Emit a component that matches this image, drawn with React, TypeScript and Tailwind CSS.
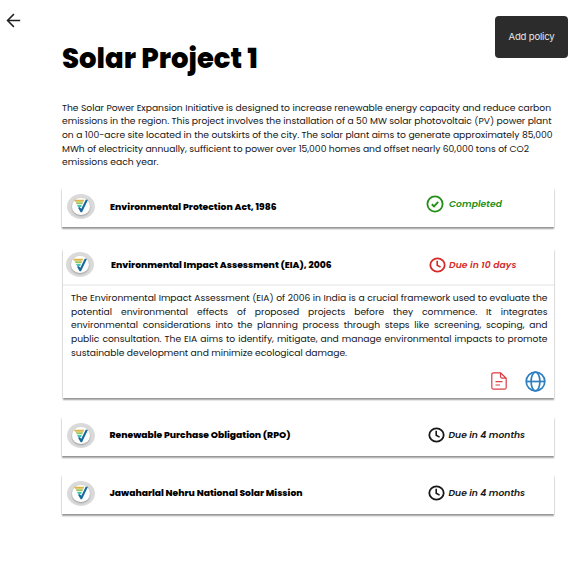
import { useLayoutEffect, useRef, useState } from "react";

/** One line of text whose tracking is adjusted so that it fills the given width. */
function Line({ text, width, className = "" }: { text: string; width: number; className?: string }) {
  const ref = useRef<HTMLSpanElement>(null);
  const [tracking, setTracking] = useState(0);
  useLayoutEffect(() => {
    if (ref.current) {
      const natural = ref.current.getBoundingClientRect().width - tracking * text.length;
      setTracking((width - natural) / text.length);
    }
  }, [text, width]);
  return (
    <span className={`block whitespace-nowrap ${className}`}>
      <span ref={ref} className="inline-block" style={{ letterSpacing: `${tracking}px` }}>
        {text}
      </span>
    </span>
  );
}

/** A line whose words are spread over the full measure of the paragraph. */
function JustifiedLine({ text }: { text: string }) {
  return <span className="block w-[476.5px] [text-align-last:justify]">{text}</span>;
}

function Badge() {
  return (
    <div className="flex h-[25px] w-7 shrink-0 items-center justify-center rounded-[50%] bg-[#dadada]">
      <div className="flex h-[17px] w-[18px] items-center justify-center rounded-full bg-white shadow-[0_1px_2px_rgba(0,0,0,0.3)]">
        <svg viewBox="0 0 42 42" className="h-3.5 w-3.5" fill="none">
          <path d="M0 2H31L28 8H3Z" fill="#d9b64a" />
          <path d="M5 10H27L25 16H8Z" fill="#9bc45a" />
          <path d="M9 18H23L22 24H12Z" fill="#45c6b4" />
          <path d="M12 26L17 24L22 29L35 2H42L24 40H20Z" fill="#176a9b" />
        </svg>
      </div>
    </div>
  );
}

function CheckIcon() {
  return (
    <svg viewBox="0 0 18 18" className="h-[18px] w-[18px]" fill="none" stroke="#229016" strokeWidth="1.8">
      <circle cx="9" cy="9" r="7.6" />
      <path d="M5.8 9.2L8 11.3L12.2 6.8" strokeWidth="1.9" />
    </svg>
  );
}

function ClockIcon() {
  return (
    <svg viewBox="0 0 17 16" className="h-4 w-[17px]" fill="none" stroke="currentColor" strokeWidth="1.8">
      <ellipse cx="8.5" cy="8" rx="7.2" ry="6.6" />
      <path d="M8.2 3.8V8.2L11.6 10.1" strokeWidth="1.6" />
    </svg>
  );
}

const intro = [
  { text: "The Solar Power Expansion Initiative is designed to increase renewable energy capacity and reduce carbon", width: 489 },
  { text: "emissions in the region. This project involves the installation of a 50 MW solar photovoltaic (PV) power plant", width: 489.5 },
  { text: "on a 100-acre site located in the outskirts of the city. The solar plant aims to generate approximately 85,000", width: 490.5 },
  { text: "MWh of electricity annually, sufficient to power over 15,000 homes and offset nearly 60,000 tons of CO2", width: 467 },
  { text: "emissions each year.", width: 96.5 },
];

const card = "w-[492px] bg-white shadow-[0_2px_1.5px_rgba(0,0,0,0.38),0_0_1.5px_rgba(0,0,0,0.16)] [clip-path:inset(0_-4px_-6px_-4px)]";

export default function App() {
  return (
    <div className="h-[562px] w-[582px] overflow-hidden bg-white font-['Poppins','Inter',sans-serif] text-black">
      <header className="flex h-[100.5px] items-start">
        <button className="ml-1.5 mt-[13px] h-[15px] w-[15px]" aria-label="Back">
          <svg viewBox="0 0 15 15" className="h-[15px] w-[15px]" fill="none" stroke="#202020" strokeWidth="1.5">
            <path d="M14.2 7.5H1.6M7.9 1.1L1.5 7.5L7.9 13.9" />
          </svg>
        </button>
        <h1 className="ml-[41px] mt-[39px] text-[27.5px] font-extrabold leading-10">
          <Line text="Solar Project 1" width={196} />
        </h1>
        <button className="ml-auto mr-3.5 mt-4 flex h-[42px] w-[73px] items-center justify-center rounded-[4px] bg-[#2c2c2c] font-['Inter',sans-serif] text-[9.6px] text-[#e6e6e6]">
          <Line text="Add policy" width={46} />
        </button>
      </header>

      <main className="pl-[62px]">
        <p className="text-[9.2px] leading-[13.7px] text-[#151515]">
          {intro.map((l) => (
            <Line key={l.text} text={l.text} width={l.width} />
          ))}
        </p>

        <section className={`mt-[19px] flex h-[39px] items-center ${card}`}>
          <div className="mb-[3px] ml-[5px]"><Badge /></div>
          <Line className="mb-0.5 ml-[15px] w-[317px] text-[9.2px] font-extrabold" text="Environmental Protection Act, 1986" width={166.5} />
          <div className="mb-[7px] flex items-center gap-[5px] text-[9.2px] font-semibold italic text-[#229016]">
            <span className="-ml-px"><CheckIcon /></span>
            <Line text="Completed" width={53} />
          </div>
        </section>

        <section className={`ml-px mt-[22px] !w-[491px] ${card}`}>
          <div className="flex h-[37px] items-center border-b-2 border-[#f1f1f1] pb-1">
            <div className="ml-[3px]"><Badge /></div>
            <Line className="ml-[17px] w-[317px] text-[9.2px] font-extrabold" text="Environmental Impact Assessment (EIA), 2006" width={220.5} />
            <div className="flex items-center gap-[3px] text-[9.2px] font-semibold italic text-[#d52b2b]">
              <span className="ml-px"><ClockIcon /></span>
              <Line text="Due in 10 days" width={67.5} />
            </div>
          </div>
          <div className="h-[112px] pl-2 pt-[5px]">
            <p className="text-[9.2px] leading-[13.7px] text-[#151515]">
              <JustifiedLine text="The Environmental Impact Assessment (EIA) of 2006 in India is a crucial framework used to evaluate the" />
              <JustifiedLine text="potential environmental effects of proposed projects before they commence. It integrates" />
              <JustifiedLine text="environmental considerations into the planning process through steps like screening, scoping, and" />
              <JustifiedLine text="public consultation. The EIA aims to identify, mitigate, and manage environmental impacts to promote" />
              <Line text="sustainable development and minimize ecological damage." width={276} />
            </p>
            <div className="mr-2 mt-[11px] flex items-center justify-end gap-[18px]">
              <svg viewBox="0 0 16 18" className="h-[18px] w-4" fill="none" stroke="#dc3e43" strokeWidth="1.2" strokeLinejoin="round">
                <path d="M9.5 0.8H2.6Q0.8 0.8 0.8 2.6V15.4Q0.8 17.2 2.6 17.2H13.4Q15.2 17.2 15.2 15.4V6.2L9.5 0.8V4.5Q9.5 6.2 11.2 6.2H15.2M4.5 9.6H11.5M4.5 13H9" />
              </svg>
              <svg viewBox="0 0 21 21" className="h-[21px] w-[21px]" fill="none" stroke="#2d7fc0" strokeWidth="1.7">
                <circle cx="10.5" cy="10.5" r="9.3" />
                <ellipse cx="10.5" cy="10.5" rx="4.4" ry="9.3" />
                <path d="M1.2 10.5H19.8" />
              </svg>
            </div>
          </div>
        </section>

        <section className={`mt-[19px] flex h-[39px] items-center ${card}`}>
          <div className="mb-0.5 ml-[5px]"><Badge /></div>
          <Line className="mb-[3px] ml-[14.5px] w-[318px] text-[9.2px] font-extrabold" text="Renewable Purchase Obligation (RPO)" width={181} />
          <div className="mb-[3px] flex items-center gap-1 text-[9.2px] font-semibold italic text-[#181818]">
            <ClockIcon />
            <Line text="Due in 4 months" width={76.5} />
          </div>
        </section>

        <section className={`mt-[19px] flex h-[39px] items-center ${card}`}>
          <div className="mb-[3px] ml-[5px]"><Badge /></div>
          <Line className="mb-[3px] ml-[14.5px] w-[318px] text-[9.2px] font-extrabold" text="Jawaharlal Nehru National Solar Mission" width={193} />
          <div className="mb-[3px] flex items-center gap-1 text-[9.2px] font-semibold italic text-[#181818]">
            <ClockIcon />
            <Line text="Due in 4 months" width={76.5} />
          </div>
        </section>
      </main>
    </div>
  );
}
